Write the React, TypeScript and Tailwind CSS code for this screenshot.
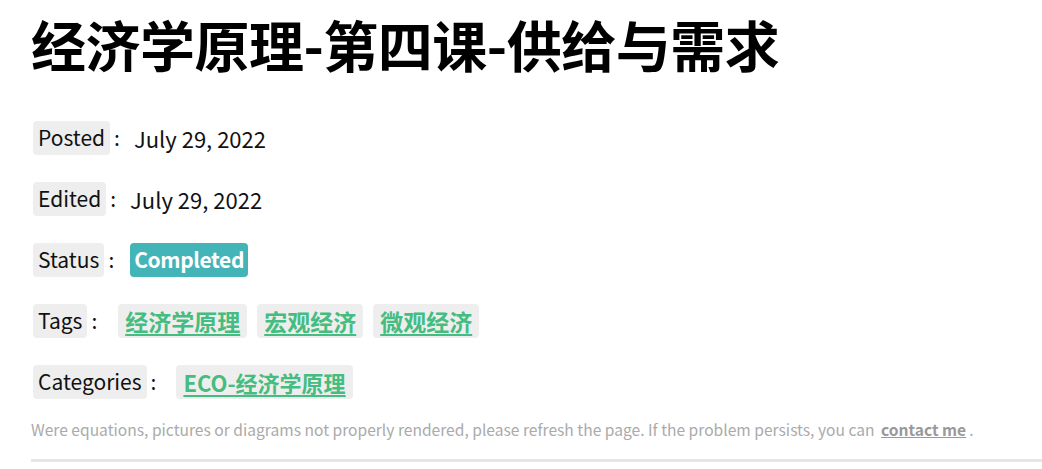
import { FC, ReactNode } from "react";

const Label: FC<{ children: ReactNode }> = ({ children }) => (
	<span className="bg-[#eeeeee] rounded-[4px] px-[5px] h-[34px] flex items-center">{children}</span>
);

const Tag: FC<{ children: ReactNode; size?: string }> = ({ children, size = "text-[23px]" }) => (
	<a className={`bg-[#eeeeee] rounded-[4px] px-[7px] h-[34px] flex items-center ${size} font-bold text-[#45bc80] underline underline-offset-[3px] decoration-2`}>
		{children}
	</a>
);

const Row: FC<{ label: string; colonGap: string; children: ReactNode }> = ({ label, colonGap, children }) => (
	<div className="flex items-center h-[34px] mb-[27px]">
		<Label>{label}</Label>
		<span className={`ml-[4px] ${colonGap}`}>:</span>
		{children}
	</div>
);

export default function App() {
	return (
		<div
			className="bg-white min-h-[469px] pl-[31px] overflow-hidden text-[#111]"
			style={{ fontFamily: '"Noto Sans CJK SC", "Noto Sans", sans-serif' }}
		>
			<h1 className="text-[55px] font-bold leading-none pt-[16px] text-black tracking-[-0.5px]">
				经济学原理-第四课-供给与需求
			</h1>
			<div className="mt-[50px] pl-[2px] text-[21px]">
				<Row label="Posted" colonGap="mr-[14px]">
					<span className="text-[22px]">July 29, 2022</span>
				</Row>
				<Row label="Edited" colonGap="mr-[14px]">
					<span className="text-[22px]">July 29, 2022</span>
				</Row>
				<Row label="Status" colonGap="mr-[16px]">
					<span className="bg-[#43b4b8] text-white font-bold rounded-[4px] px-[4px] h-[34px] flex items-center tracking-[-0.4px]">
						Completed
					</span>
				</Row>
				<Row label="Tags" colonGap="mr-[21px]">
					<div className="flex gap-[10px]">
						<Tag>经济学原理</Tag>
						<Tag>宏观经济</Tag>
						<Tag>微观经济</Tag>
					</div>
				</Row>
				<Row label="Categories" colonGap="mr-[20px]">
					<Tag size="text-[22px]">ECO-经济学原理</Tag>
				</Row>
			</div>
			<p className="-mt-[8px] text-[15.6px] text-[#aaaaaa]">
				Were equations, pictures or diagrams not properly rendered, please refresh the page. If the problem persists, you can{" "}
				<a className="font-bold text-[#999999] underline mx-[3px]">contact me</a>.
			</p>
			<div className="mt-[18px] h-[3px] bg-[#e6e6e6]" />
		</div>
	);
}
